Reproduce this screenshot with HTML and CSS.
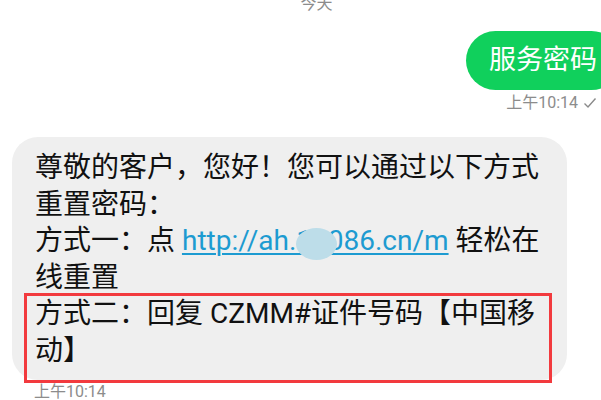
FILE: index.html
```html
<!DOCTYPE html>
<html lang="zh-CN">
<head>
<meta charset="utf-8">
<link rel="stylesheet" href="styles.css">
</head>
<body>
<div class="screen">
  <div class="date">今天</div>
  <div class="row row-out">
    <div class="bubble-out">服务密码</div>
  </div>
  <div class="meta meta-out">
    <span>上午10:14</span>
    <svg class="check" width="14" height="12" viewBox="0 0 14 12"><polyline points="1.5,6.5 5,10 12.5,1.5" fill="none" stroke="#8a8a8a" stroke-width="1.4"/></svg>
  </div>
  <div class="row row-in">
    <div class="bubble-in">
      <p class="msg">尊敬的客户，您好！您可以通过以下方式重置密码：</p>
      <p class="msg">方式一：点 <span class="link">http://ah.10086.cn/m<span class="blur"></span></span> 轻松在线重置</p>
      <p class="msg">方式二：回复 CZMM#证件号码【中国移动】</p>
    </div>
    <div class="highlight"></div>
  </div>
  <div class="meta meta-in">上午10:14</div>
</div>
</body>
</html>
```
FILE: styles.css
```css
html, body {
  margin: 0;
  padding: 0;
  background: #ffffff;
}
.screen {
  width: 601px;
  height: 400px;
  overflow: hidden;
  position: relative;
  font-family: Roboto, "Noto Sans CJK SC", "Noto Sans", sans-serif;
  color: #111111;
}
.date {
  height: 18px;
  margin-top: -5px;
  line-height: 18px;
  font-size: 16px;
  color: #8c8c8c;
  text-align: center;
  padding-left: 32px;
}
.row-out {
  display: flex;
  justify-content: flex-end;
  margin-top: 18px;
  margin-right: -20px;
}
.bubble-out {
  height: 59px;
  line-height: 59px;
  padding: 0 24px 0 23px;
  border-radius: 30px;
  background: #10d05c;
  color: #ffffff;
  font-size: 27px;
}
.meta {
  font-size: 16px;
  color: #8c8c8c;
  line-height: 20px;
}
.meta-out {
  display: flex;
  justify-content: flex-end;
  align-items: center;
  gap: 5px;
  margin-top: 3px;
  padding-right: 4px;
}
.check {
  display: block;
}
.row-in {
  position: relative;
  margin-top: 24px;
  padding-left: 12px;
}
.bubble-in {
  width: 510px;
  padding: 13px 22px 11px 23px;
  border-radius: 26px;
  background: #efefef;
}
.msg {
  margin: 0;
  font-size: 28px;
  line-height: 36.5px;
  font-family: Roboto, "Noto Sans CJK SC", sans-serif;
}
.link {
  position: relative;
  color: #1d9bd1;
  text-decoration: underline;
  text-decoration-thickness: 2px;
  text-underline-offset: 3px;
}
.blur {
  position: absolute;
  left: 114px;
  top: 4px;
  width: 41px;
  height: 32px;
  border-radius: 50%;
  background: #bddde9;
}
.highlight {
  position: absolute;
  left: 24px;
  top: 156px;
  width: 522px;
  height: 84px;
  border: 3px solid #f23a3e;
}
.meta-in {
  margin-top: 2px;
  padding-left: 34px;
}
```
